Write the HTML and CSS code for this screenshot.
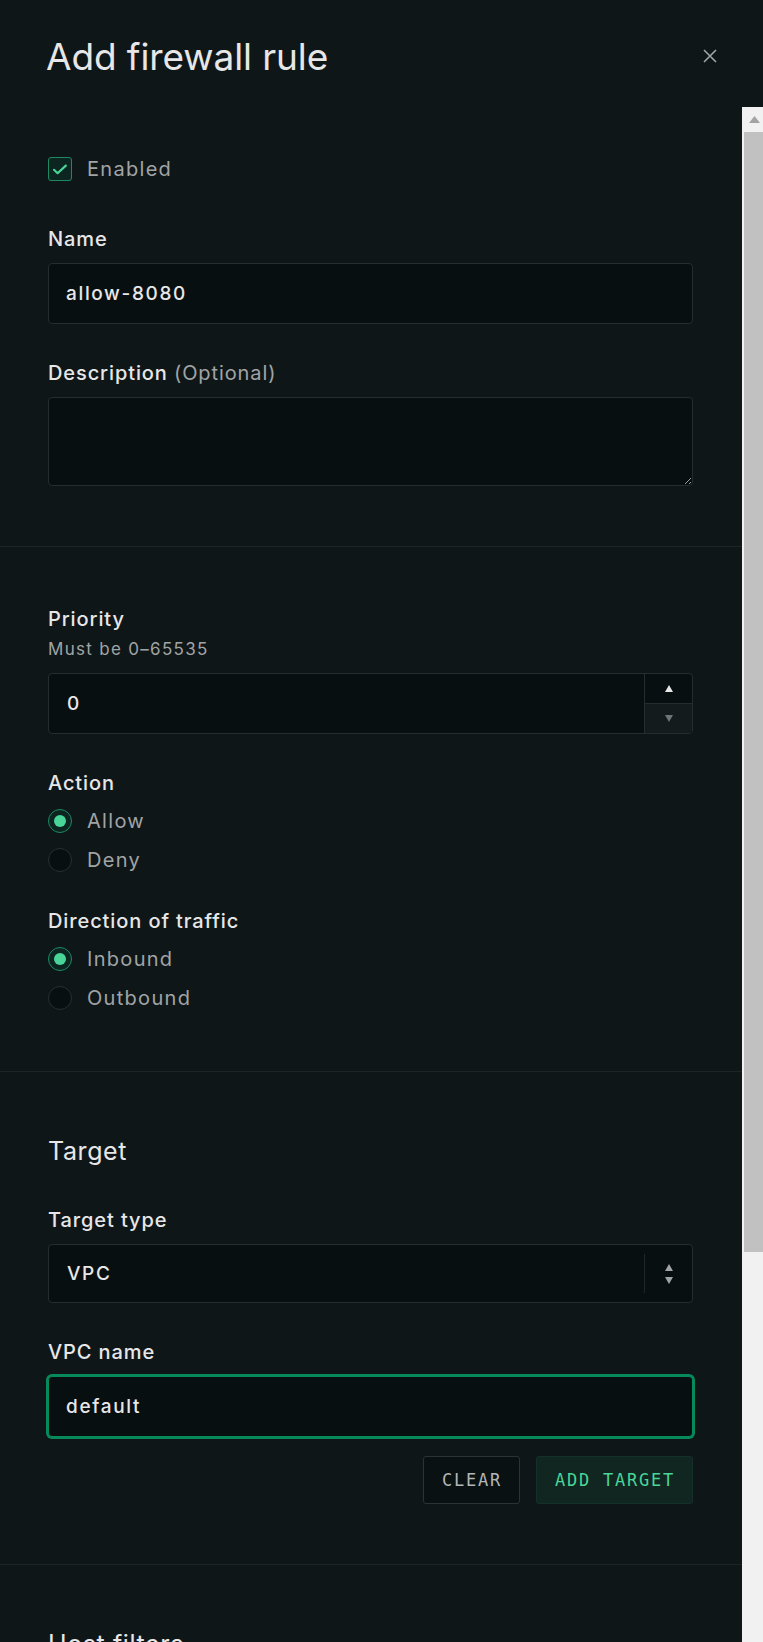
FILE: index.html
```html
<!DOCTYPE html>
<html lang="en">
<head>
<meta charset="utf-8">
<title>Add firewall rule</title>
<link rel="stylesheet" href="styles.css">
</head>
<body>
<div class="panel">
  <header class="panel-header">
    <h1 class="panel-title">Add firewall rule</h1>
    <button class="close" type="button" aria-label="Close">
      <svg width="14" height="14" viewBox="0 0 14 14"><path d="M1 1L13 13M13 1L1 13" stroke="currentColor" stroke-width="1.6" fill="none"/></svg>
    </button>
  </header>
  <div class="panel-body">
    <div class="panel-content">
      <section class="section section-first">
        <label class="option check-row">
          <span class="checkbox">
            <svg width="24" height="24" viewBox="0 0 24 24"><path d="M6 12.8L9.6 16.2L17.8 8.6" stroke="#48d597" stroke-width="2.2" fill="none" stroke-linecap="round" stroke-linejoin="round"/></svg>
          </span>
          <span class="option-text">Enabled</span>
        </label>
        <div class="field">
          <div class="label">Name</div>
          <input class="text-input" type="text" value="allow-8080">
        </div>
        <div class="field">
          <div class="label">Description <span class="optional">(Optional)</span></div>
          <textarea class="textarea"></textarea>
        </div>
      </section>

      <section class="section section-rules">
        <div class="field field-hint">
          <div class="label">Priority</div>
          <div class="hint">Must be 0–65535</div>
          <div class="number-field">
            <input class="number-input" type="text" value="0">
            <div class="stepper">
              <span class="step step-up"><svg width="8" height="7" viewBox="0 0 8 7"><path d="M0 7L4 0L8 7Z" fill="#e7e7e8"/></svg></span>
              <span class="step step-down"><svg width="8" height="7" viewBox="0 0 8 7"><path d="M0 0L8 0L4 7Z" fill="#6f7475"/></svg></span>
            </div>
          </div>
        </div>
        <div class="field radio-group">
          <div class="label">Action</div>
          <div class="options">
            <label class="option"><span class="radio radio-on"><span class="dot"></span></span><span class="option-text">Allow</span></label>
            <label class="option"><span class="radio"></span><span class="option-text">Deny</span></label>
          </div>
        </div>
        <div class="field radio-group">
          <div class="label">Direction of traffic</div>
          <div class="options">
            <label class="option"><span class="radio radio-on"><span class="dot"></span></span><span class="option-text">Inbound</span></label>
            <label class="option"><span class="radio"></span><span class="option-text">Outbound</span></label>
          </div>
        </div>
      </section>

      <section class="section">
        <h2 class="section-title">Target</h2>
        <div class="field">
          <div class="label">Target type</div>
          <div class="select">
            <span class="select-value">VPC</span>
            <span class="select-divider"></span>
            <span class="select-arrows"><svg width="8" height="20" viewBox="0 0 8 20"><path d="M0 7L4 0L8 7Z M0 13L8 13L4 20Z" fill="#a1a4a5"/></svg></span>
          </div>
        </div>
        <div class="field">
          <div class="label">VPC name</div>
          <input class="text-input is-focused" type="text" value="default">
        </div>
        <div class="actions">
          <button class="btn btn-ghost" type="button">Clear</button>
          <button class="btn btn-accent" type="button">Add target</button>
        </div>
      </section>

      <section class="section">
        <h2 class="section-title">Host filters</h2>
        <div class="field">
          <div class="label">Host type</div>
          <div class="select">
            <span class="select-value">VPC</span>
            <span class="select-divider"></span>
            <span class="select-arrows"><svg width="8" height="20" viewBox="0 0 8 20"><path d="M0 7L4 0L8 7Z M0 13L8 13L4 20Z" fill="#a1a4a5"/></svg></span>
          </div>
        </div>
      </section>
    </div>
    <div class="scrollbar" aria-hidden="true">
      <span class="scroll-btn"><svg width="11" height="7" viewBox="0 0 11 7"><path d="M0 7L5.5 0L11 7Z" fill="#a3a3a3"/></svg></span>
      <span class="scroll-thumb"></span>
    </div>
  </div>
</div>
</body>
</html>
```

FILE: styles.css
```css
* { box-sizing: border-box; }

html, body {
  margin: 0;
  height: 100%;
}

body {
  background: #0f1618;
  color: #e7e7e8;
  font-family: Inter, "Noto Sans", sans-serif;
  overflow: hidden;
}

.panel {
  height: 100vh;
  display: flex;
  flex-direction: column;
}

.panel-header {
  flex: 0 0 107px;
  display: flex;
  align-items: flex-start;
  justify-content: space-between;
  padding: 35px 46px 0 46px;
}

.panel-title {
  margin: 0;
  font-size: 37px;
  line-height: 44px;
  font-weight: 400;
  letter-spacing: -0.1px;
  color: #e7e7e8;
}

.close {
  margin-top: 14px;
  width: 14px;
  height: 14px;
  padding: 0;
  border: 0;
  background: none;
  color: #a1a4a5;
  display: flex;
}

.panel-body {
  flex: 1;
  min-height: 0;
  display: flex;
  overflow: hidden;
}

.panel-content {
  flex: 1;
  min-width: 0;
}

.scrollbar {
  flex: 0 0 21px;
  background: #f1f1f1;
  display: flex;
  flex-direction: column;
}

.scroll-btn {
  height: 25px;
  flex: 0 0 25px;
  display: flex;
  align-items: center;
  justify-content: center;
  padding-left: 4px;
}

.scroll-thumb {
  flex: 0 0 1120px;
  margin-left: 2px;
  background: #c1c1c1;
}

.section {
  padding: 60px 49px 60px 48px;
  border-top: 1px solid #1c2426;
}

.section-first {
  padding-top: 50px;
  border-top: 0;
}

.section-rules {
  padding-bottom: 61px;
}

.section-title {
  margin: 0 0 38px;
  font-size: 25px;
  line-height: 38px;
  font-weight: 400;
  letter-spacing: 0.6px;
  color: #e7e7e8;
}

.field + .field {
  margin-top: 37px;
}

.label {
  font-size: 20px;
  line-height: 24px;
  font-weight: 500;
  letter-spacing: 0.9px;
  color: #e7e7e8;
  margin-bottom: 12px;
}

.optional {
  font-weight: 400;
  color: #a1a4a5;
}

.field-hint .label {
  margin-bottom: 8px;
}

.hint {
  font-size: 17px;
  line-height: 20px;
  color: #a1a4a5;
  letter-spacing: 1.3px;
  margin-bottom: 14px;
}

.radio-group .label {
  margin-bottom: 14px;
}

.options {
  display: flex;
  flex-direction: column;
  gap: 15px;
}

.option {
  display: flex;
  align-items: center;
  gap: 15px;
  height: 24px;
}

.check-row {
  margin-bottom: 46px;
}

.option-text {
  font-size: 20px;
  line-height: 24px;
  letter-spacing: 1.3px;
  color: #a1a4a5;
}

.checkbox {
  width: 24px;
  height: 24px;
  border: 1px solid #1d8a61;
  border-radius: 3px;
  background: #0c2521;
  display: flex;
  align-items: center;
  justify-content: center;
}

.checkbox svg {
  margin: -1px;
}

.radio {
  width: 24px;
  height: 24px;
  border-radius: 50%;
  border: 1px solid #263032;
  background: #080f11;
  display: flex;
  align-items: center;
  justify-content: center;
}

.radio-on {
  border-color: #1d8a61;
  background: #0c2521;
}

.dot {
  width: 12px;
  height: 12px;
  border-radius: 50%;
  background: #48d597;
}

.text-input {
  display: block;
  width: 100%;
  height: 61px;
  margin: 0;
  background: #080f11;
  border: 1px solid #252d2f;
  border-radius: 4px;
  padding: 0 17px;
  font-family: Inter, "Noto Sans", sans-serif;
  font-size: 19px;
  font-weight: 500;
  letter-spacing: 1.65px;
  color: #e7e7e8;
  outline: none;
}

.is-focused {
  border-color: #078a5b;
  box-shadow: 0 0 0 2px #078a5b;
}

.textarea {
  display: block;
  width: 100%;
  height: 89px;
  margin: 0;
  background: #080f11;
  border: 1px solid #252d2f;
  border-radius: 4px;
  padding: 12px 17px;
  font-family: Inter, "Noto Sans", sans-serif;
  font-size: 19px;
  color: #e7e7e8;
  resize: vertical;
  outline: none;
  color-scheme: dark;
}

.number-field {
  display: flex;
  height: 61px;
  background: #080f11;
  border: 1px solid #252d2f;
  border-radius: 4px;
  overflow: hidden;
}

.number-input {
  flex: 1;
  min-width: 0;
  height: 100%;
  margin: 0;
  border: 0;
  background: transparent;
  padding: 0 17px 0 18px;
  font-family: Inter, "Noto Sans", sans-serif;
  font-size: 19px;
  font-weight: 500;
  letter-spacing: 1.65px;
  color: #e7e7e8;
  outline: none;
}

.stepper {
  width: 48px;
  display: flex;
  flex-direction: column;
  border-left: 1px solid #252d2f;
}

.step {
  flex: 1;
  display: flex;
  align-items: center;
  justify-content: center;
}

.step-down {
  background: #141b1d;
  border-top: 1px solid #252d2f;
}

.select {
  display: flex;
  align-items: center;
  height: 59px;
  background: #080f11;
  border: 1px solid #252d2f;
  border-radius: 4px;
}

.select-value {
  flex: 1;
  padding-left: 18px;
  font-size: 19px;
  font-weight: 500;
  letter-spacing: 1.65px;
  color: #e7e7e8;
}

.select-divider {
  width: 1px;
  align-self: stretch;
  margin: 9px 0;
  background: #1f2729;
}

.select-arrows {
  width: 47px;
  display: flex;
  justify-content: center;
  align-items: center;
}

.actions {
  display: flex;
  justify-content: flex-end;
  gap: 16px;
  margin-top: 19px;
}

.btn {
  height: 48px;
  padding: 0 17px 0 18px;
  border-radius: 3px;
  font-family: "DejaVu Sans Mono", "Liberation Mono", monospace;
  font-size: 17px;
  letter-spacing: 1.76px;
  text-transform: uppercase;
  display: flex;
  align-items: center;
  cursor: pointer;
}

.btn-ghost {
  background: #0a1113;
  border: 1px solid #2b3335;
  color: #b3b6b7;
}

.btn-accent {
  background: #112521;
  border: 1px solid #15302a;
  color: #48d597;
}
```
